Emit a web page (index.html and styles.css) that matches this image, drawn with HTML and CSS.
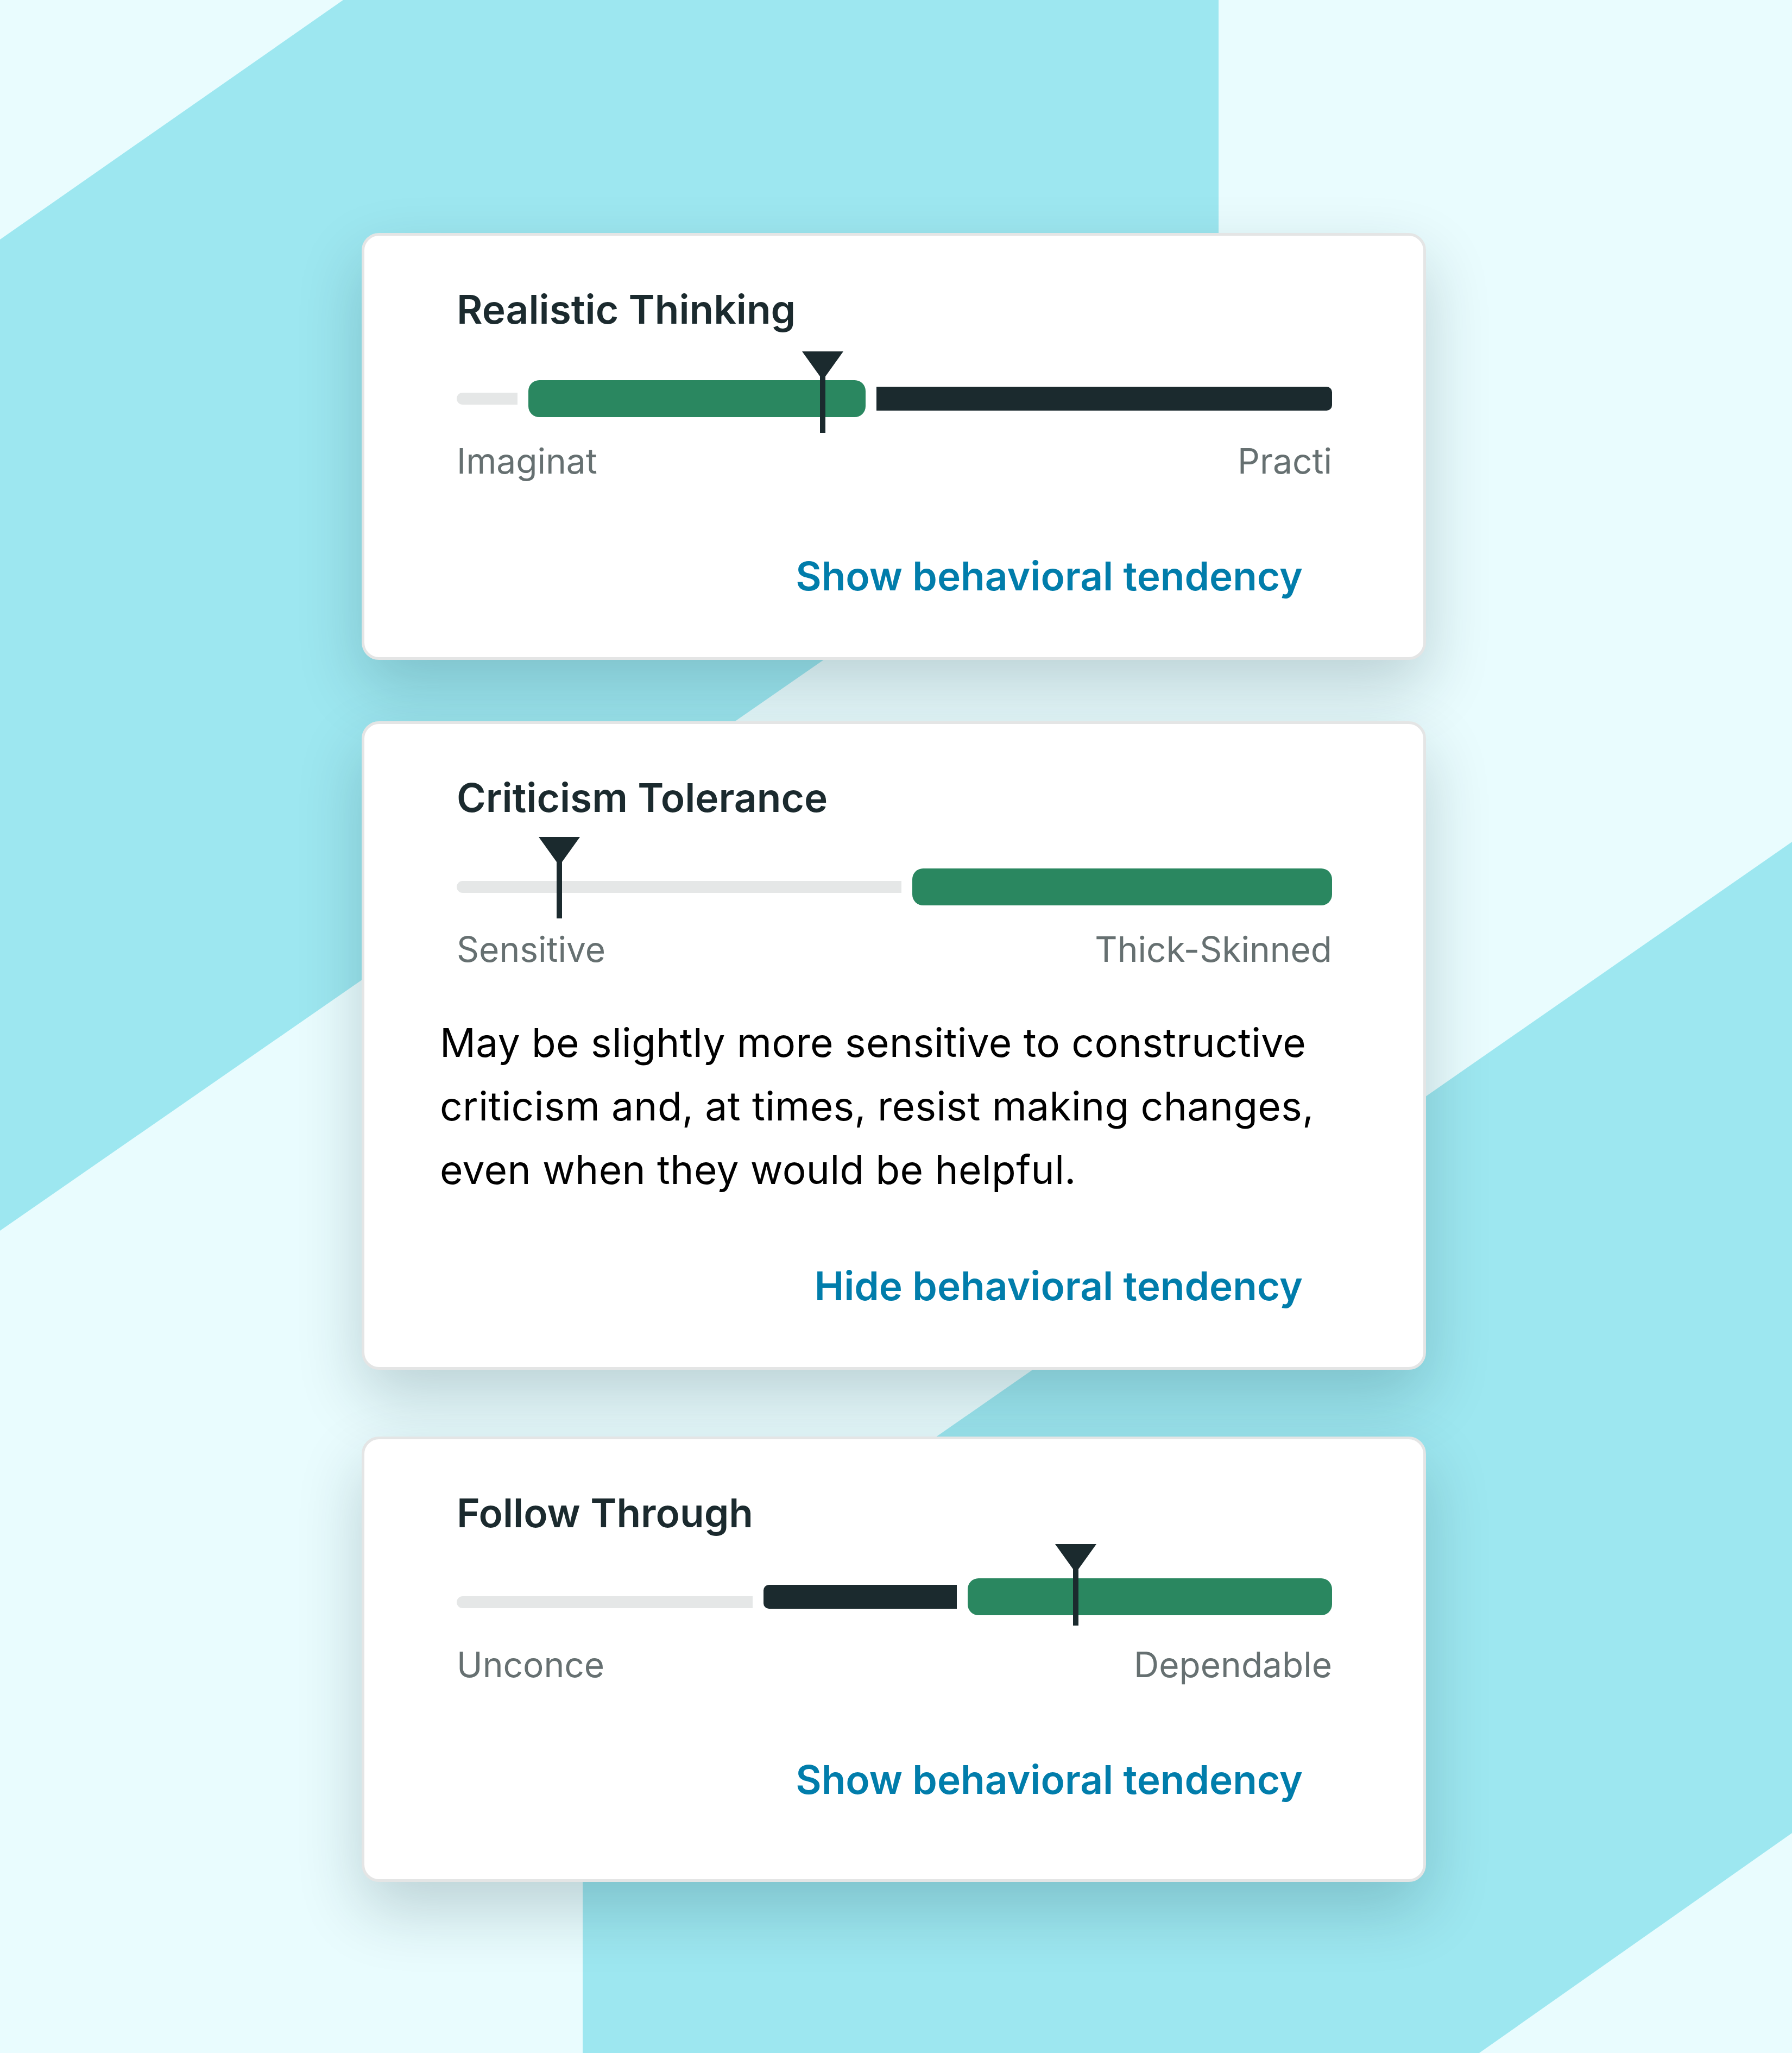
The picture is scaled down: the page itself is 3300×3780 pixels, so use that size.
FILE: index.html
```html
<!DOCTYPE html>
<html lang="en">
<head>
    <meta charset="UTF-8">
    <meta name="viewport" content="width=device-width, initial-scale=1.0">
    <title>Behavioral Tendencies</title>
    <link rel="stylesheet" href="styles.css">
</head>
<body>
    <!-- faixas diagonais do fundo -->
    <svg class="backdrop" width="3300" height="3780" viewBox="0 0 3300 3780">
        <polygon points="0,441 632,0 2244,0 2244,711 0,2266" fill="#9de7f0"/>
        <polygon points="1073,3098 3300,1550 3300,3375 2724,3780 1073,3780" fill="#9de7f0"/>
    </svg>

    <div class="list">
        <div class="card">
            <div class="scale">
                <h2 class="title">Realistic Thinking</h2>
                <div class="bar">
                    <div class="seg light round-left" style="flex: 112"></div>
                    <div class="seg green" style="flex: 621"></div>
                    <div class="seg dark round-right" style="flex: 840"></div>
                    <svg class="marker" style="left: calc(41.8% - 38px)" width="76" height="150" viewBox="0 0 76 150">
                        <path d="M0 0 H76 L43 46 V150 H33 V46 Z" fill="#1b2a2e"/>
                    </svg>
                </div>
                <div class="labels">
                    <span>Imaginat</span>
                    <span>Practi</span>
                </div>
            </div>
            <div class="actions">
                <a class="toggle" href="#">Show behavioral tendency</a>
            </div>
        </div>

        <div class="card open">
            <div class="scale">
                <h2 class="title">Criticism Tolerance</h2>
                <div class="bar">
                    <div class="seg light round-left" style="flex: 818"></div>
                    <div class="seg green" style="flex: 772"></div>
                    <svg class="marker raised" style="left: calc(11.7% - 38px)" width="76" height="150" viewBox="0 0 76 150">
                        <path d="M0 0 H76 L43 46 V150 H33 V46 Z" fill="#1b2a2e"/>
                    </svg>
                </div>
                <div class="labels">
                    <span>Sensitive</span>
                    <span>Thick-Skinned</span>
                </div>
            </div>
            <p class="tendency">May be slightly more sensitive to constructive criticism and, at times, resist making changes, even when they would be helpful.</p>
            <div class="actions">
                <a class="toggle" href="#">Hide behavioral tendency</a>
            </div>
        </div>

        <div class="card">
            <div class="scale">
                <h2 class="title">Follow Through</h2>
                <div class="bar high">
                    <div class="seg light round-left low" style="flex: 545"></div>
                    <div class="seg dark round-left" style="flex: 357"></div>
                    <div class="seg green" style="flex: 671"></div>
                    <svg class="marker higher" style="left: calc(70.7% - 38px)" width="76" height="150" viewBox="0 0 76 150">
                        <path d="M0 0 H76 L43 46 V150 H33 V46 Z" fill="#1b2a2e"/>
                    </svg>
                </div>
                <div class="labels">
                    <span>Unconce</span>
                    <span>Dependable</span>
                </div>
            </div>
            <div class="actions">
                <a class="toggle" href="#">Show behavioral tendency</a>
            </div>
        </div>
    </div>
</body>
</html>
```

FILE: styles.css
```css
body {
    font-family: Inter, "Noto Sans", sans-serif;
    background-color: #e9fcfe;
    margin: 0;
    padding: 0;
    width: 3300px;
    height: 3780px;
    overflow: hidden;
    position: relative;
}

.backdrop {
    position: absolute;
    top: 0;
    left: 0;
    z-index: 0;
}

.list {
    position: relative;
    z-index: 1;
    padding: 429px 8px 0 0;
}

.card {
    box-sizing: border-box;
    width: 1960px;
    margin: 0 auto 113px;
    padding: 92px 168px 104px 139px;
    background-color: #fff;
    border: 5px solid #e4e5e5;
    border-radius: 32px;
    box-shadow: 0 50px 120px rgba(0, 40, 50, 0.2);
}

.card.open {
    margin-bottom: 123px;
}

.card:last-child {
    padding-bottom: 138px; /* o ultimo cartao fica um pouco mais alto */
}

.scale {
    padding-left: 31px;
}

.title {
    margin: 0;
    font-size: 73px;
    line-height: 88px;
    font-weight: 600;
    color: #1b2a2e;
}

.bar {
    position: relative;
    display: flex;
    align-items: center;
    gap: 20px;
    height: 68px;
    margin-top: 86px;
}

.bar.high {
    margin-top: 76px;
}

.bar.high + .labels {
    margin-top: 53px;
}

.seg {
    flex-basis: 0;
}

.seg.light {
    height: 22px;
    background-color: #e5e7e7;
}

.seg.light.low {
    margin-top: 20px;
}

.seg.dark {
    height: 44px;
    background-color: #1b2a2e;
}

.seg.green {
    height: 68px;
    background-color: #2a8760;
    border-radius: 20px;
}

.seg.light.round-left {
    border-radius: 11px 0 0 11px;
}

.seg.dark.round-left {
    border-radius: 10px 0 0 10px;
}

.seg.dark.round-right {
    border-radius: 0 10px 10px 0;
}

.marker {
    position: absolute;
    top: -53px;
}

.marker.raised {
    top: -58px;
}

.marker.higher {
    top: -63px;
}

.labels {
    display: flex;
    justify-content: space-between;
    margin-top: 43px;
    font-size: 64px;
    line-height: 76px;
    color: #667071;
}

.tendency {
    margin: 75px 0 0;
    font-size: 73px;
    line-height: 117px;
    letter-spacing: 0.4px;
    color: #000;
}

.actions {
    margin-top: 129px;
    padding-right: 54px;
    text-align: right;
    font-size: 73px;
    line-height: 90px;
    font-weight: 600;
}

.tendency + .actions {
    margin-top: 111px;
}

.toggle {
    color: #017dab;
    text-decoration: none;
}
```
